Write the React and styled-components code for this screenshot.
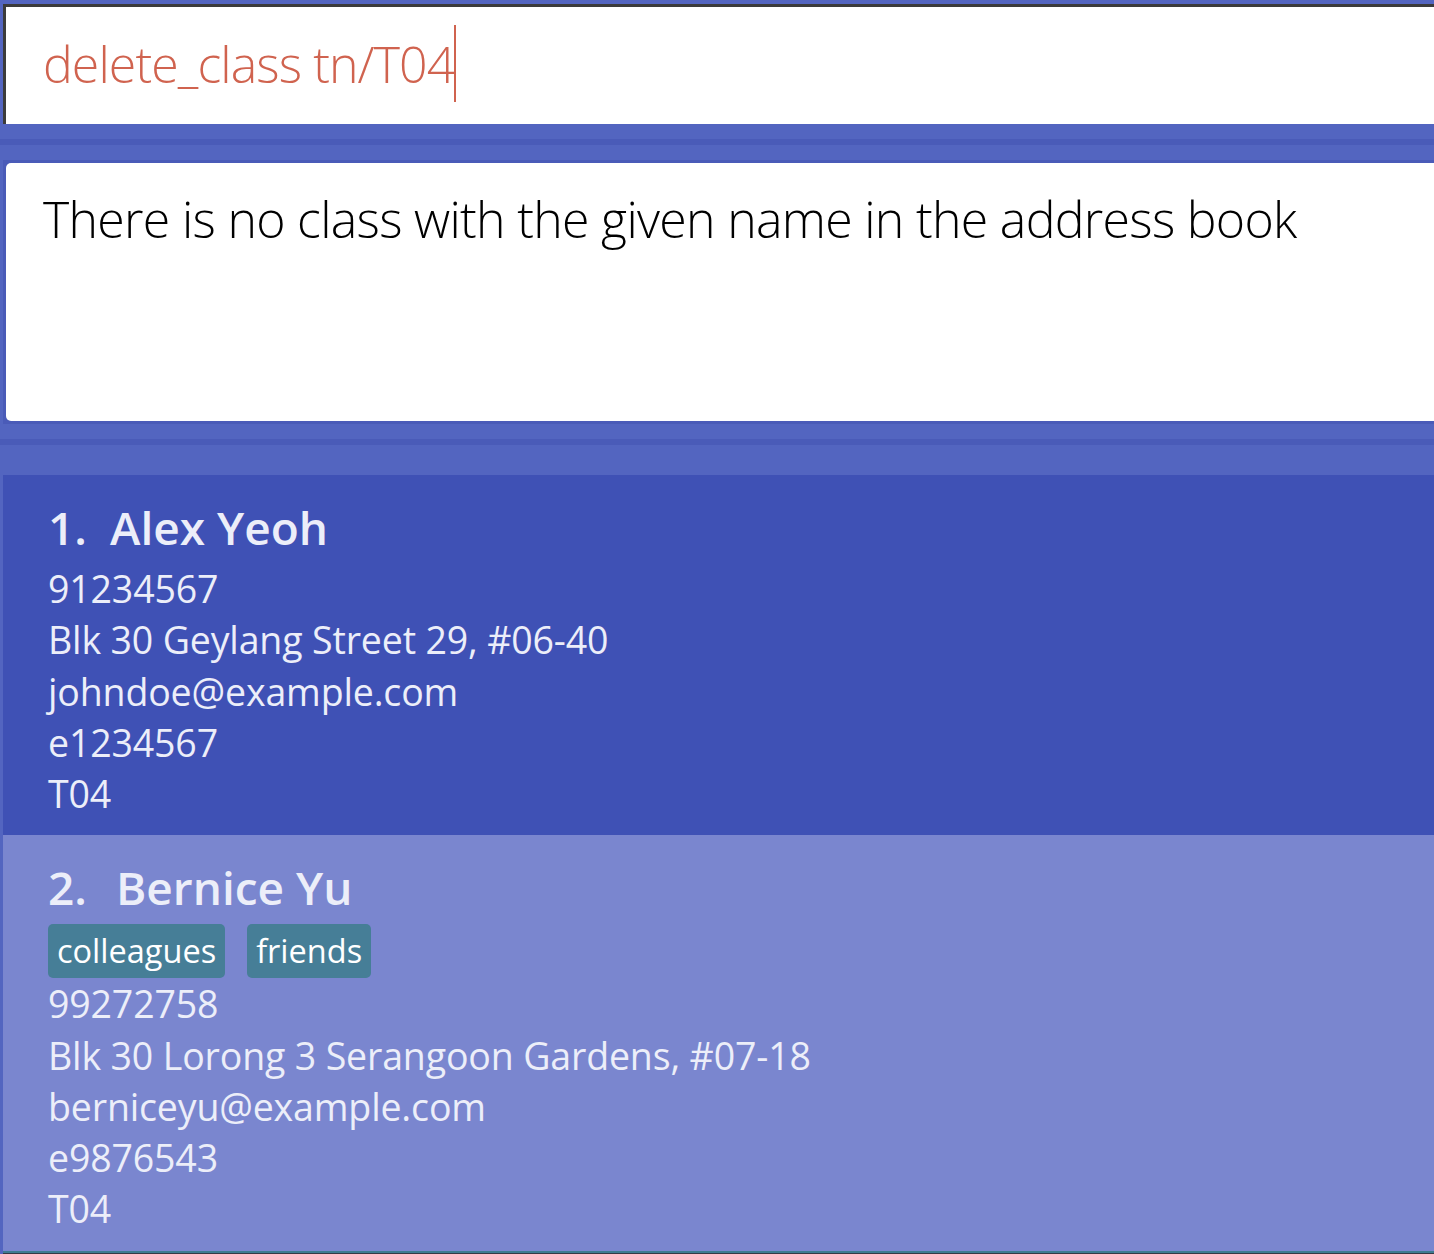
import React from "react";
import styled, { createGlobalStyle } from "styled-components";

const GlobalStyle = createGlobalStyle`
  html, body {
    margin: 0;
    padding: 0;
    background: #5365c0;
    overflow: hidden;
  }
  body {
    font-family: "Open Sans", "Noto Sans", "Liberation Sans", sans-serif;
  }
`;

const Page = styled.div`
  width: 1434px;
  height: 1254px;
  background: #5365c0;
  display: flex;
  flex-direction: column;
  overflow: hidden;
`;

const CommandSection = styled.div`
  padding: 4px 0 15px 3px;
`;

const CommandBox = styled.div`
  height: 117px;
  background: #ffffff;
  border-top: 3px solid #3b3b3b;
  border-left: 3px solid #3b3b3b;
  padding-left: 37px;
  display: flex;
  align-items: center;
`;

const CommandText = styled.span`
  font-family: "Open Sans", "Noto Sans", sans-serif;
  font-weight: 300;
  font-size: 50px;
  letter-spacing: -0.9px;
  color: #d0634f;
  line-height: 1;
  white-space: nowrap;
  margin-top: -3px;
`;

const Caret = styled.span`
  flex-shrink: 0;
  width: 2px;
  height: 77px;
  background: #d0634f;
  margin: -4px 0 0 0;
`;

const Divider = styled.div`
  height: 6px;
  background: #4a5bb8;
  flex-shrink: 0;
`;

const ResultSection = styled.div`
  padding: 15px 0 15px 3px;
`;

const ResultFrame = styled.div`
  background: #4a5bb8;
  padding: 3px 0 3px 3px;
`;

const ResultBox = styled.div`
  height: 258px;
  background: #ffffff;
  border-radius: 5px 0 0 5px;
  box-sizing: border-box;
  padding: 23px 0 0 37px;
`;

const ResultText = styled.p`
  margin: 0;
  font-family: "Open Sans", "Noto Sans", sans-serif;
  font-weight: 300;
  font-size: 50px;
  letter-spacing: -0.7px;
  line-height: 66px;
  color: #000000;
  white-space: nowrap;
`;

const ListSection = styled.div`
  padding: 30px 0 0 3px;
  display: flex;
  flex-direction: column;
`;

const Card = styled.div`
  background: ${(p) => (p.$alt ? "#7a86cf" : "#3f51b5")};
  padding: 16px 0 16px 45px;
  color: #eceef9;
`;

const NameRow = styled.div`
  font-family: "Open Sans", "Noto Sans", sans-serif;
  font-weight: 600;
  font-size: 46px;
  line-height: 72px;
  display: flex;
  white-space: nowrap;
`;

const Index = styled.span`
  width: ${(p) => p.$w}px;
`;

const TagRow = styled.div`
  display: flex;
  gap: 22px;
  margin-top: 1px;
`;

const Tag = styled.span`
  background: #467e97;
  color: #ffffff;
  border-radius: 5px;
  font-family: "Open Sans", "Noto Sans", sans-serif;
  font-size: 32.5px;
  line-height: 54px;
  height: 54px;
  padding: 0 9px;
`;

const Detail = styled.div`
  font-family: "Open Sans", "Noto Sans", sans-serif;
  font-weight: 400;
  font-size: 37.5px;
  letter-spacing: -0.15px;
  line-height: 51.25px;
  white-space: nowrap;
`;

const StatusBar = styled.div`
  flex: 1;
  border-top: 2px solid #3e7b91;
  background: #343a46;
  margin-left: 3px;
`;

const persons = [
  {
    name: "Alex Yeoh",
    indexWidth: 62,
    tags: [],
    phone: "91234567",
    address: "Blk 30 Geylang Street 29, #06-40",
    email: "johndoe@example.com",
    id: "e1234567",
    cls: "T04",
  },
  {
    name: "Bernice Yu",
    indexWidth: 68,
    tags: ["colleagues", "friends"],
    phone: "99272758",
    address: "Blk 30 Lorong 3 Serangoon Gardens, #07-18",
    email: "berniceyu@example.com",
    id: "e9876543",
    cls: "T04",
  },
];

export default function App() {
  return (
    <Page>
      <GlobalStyle />
      <CommandSection>
        <CommandBox>
          <CommandText>delete_class tn/T04</CommandText>
          <Caret />
        </CommandBox>
      </CommandSection>
      <Divider />
      <ResultSection>
        <ResultFrame>
          <ResultBox>
            <ResultText>
              There is no class with the given name in the address book
            </ResultText>
          </ResultBox>
        </ResultFrame>
      </ResultSection>
      <Divider />
      <ListSection>
        {persons.map((p, i) => (
          <Card key={p.name} $alt={i % 2 === 1}>
            <NameRow>
              <Index $w={p.indexWidth}>{i + 1}.</Index>
              <span>{p.name}</span>
            </NameRow>
            {p.tags.length > 0 && (
              <TagRow>
                {p.tags.map((t) => (
                  <Tag key={t}>{t}</Tag>
                ))}
              </TagRow>
            )}
            <Detail>{p.phone}</Detail>
            <Detail>{p.address}</Detail>
            <Detail>{p.email}</Detail>
            <Detail>{p.id}</Detail>
            <Detail>{p.cls}</Detail>
          </Card>
        ))}
      </ListSection>
      <StatusBar />
    </Page>
  );
}
